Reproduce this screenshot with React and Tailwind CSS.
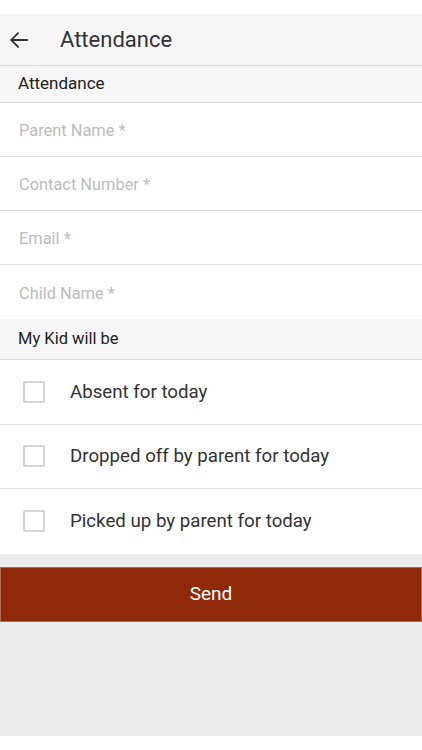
import React, { useState } from 'react';

const fields = ['Parent Name *', 'Contact Number *', 'Email *', 'Child Name *'];
const options = ['Absent for today', 'Dropped off by parent for today', 'Picked up by parent for today'];

const App = () => {
  const [values, setValues] = useState({});
  const [checked, setChecked] = useState([]);

  const toggle = (i) => {
    setChecked((prev) => (prev.includes(i) ? prev.filter((x) => x !== i) : [...prev, i]));
  };

  return (
    <div className="w-[422px] h-[750px] bg-white flex flex-col font-['Roboto',sans-serif]">
      <div className="h-[14px] bg-white" />
      {/* top bar */}
      <div className="h-[52px] bg-[#f7f7f7] border-b border-[#dcdcdc] flex items-center">
        <button className="w-[30px] h-full flex items-center justify-end">
          <svg width="22" height="22" viewBox="0 0 24 24" fill="none" stroke="#333" strokeWidth="2" strokeLinecap="round">
            <path d="M21 12H3.5M11 4.5L3.5 12L11 19.5" />
          </svg>
        </button>
        <span className="ml-[30px] text-[22px] text-[#333] leading-none">Attendance</span>
      </div>

      <div className="h-[37px] bg-[#f7f7f7] border-b border-[#dcdcdc] flex items-center pl-[18px] text-[17px] text-[#222]">
        Attendance
      </div>

      {fields.map((f, i) => (
        <div key={f} className={`h-[54px] flex items-center ${i < fields.length - 1 ? 'border-b border-[#e0e0e0]' : ''}`}>
          <input
            type="text"
            placeholder={f}
            value={values[f] || ''}
            onChange={(e) => setValues({ ...values, [f]: e.target.value })}
            className="w-full h-full pl-[19px] pt-[2px] text-[16.4px] text-[#333] placeholder:text-[#bdbdbd] outline-none bg-white"
          />
        </div>
      ))}

      <div className="h-[41px] bg-[#f7f7f7] border-b border-[#dcdcdc] flex items-center pl-[18px] text-[16.5px] text-[#222]">
        My Kid will be
      </div>

      {options.map((o, i) => (
        <div
          key={o}
          onClick={() => toggle(i)}
          className={`h-[64.5px] flex items-center cursor-pointer ${i < options.length - 1 ? 'border-b border-[#e0e0e0]' : ''}`}
        >
          <div className="ml-[23px] w-[22px] h-[22px] border-2 border-[#d6d6d6] rounded-[2px] flex items-center justify-center">
            {checked.includes(i) && <div className="w-[12px] h-[12px] bg-[#8f2a08]" />}
          </div>
          <span className="ml-[25px] text-[18.7px] text-[#333]">{o}</span>
        </div>
      ))}

      <div className="flex-1 bg-[#ececec] pt-[13px]">
        <button className="w-full h-[55px] bg-[#8f2a08] border border-[#b86a55] text-white text-[19px]">
          Send
        </button>
      </div>
      <div className="h-[14px] bg-white" />
    </div>
  );
};

export default App;
